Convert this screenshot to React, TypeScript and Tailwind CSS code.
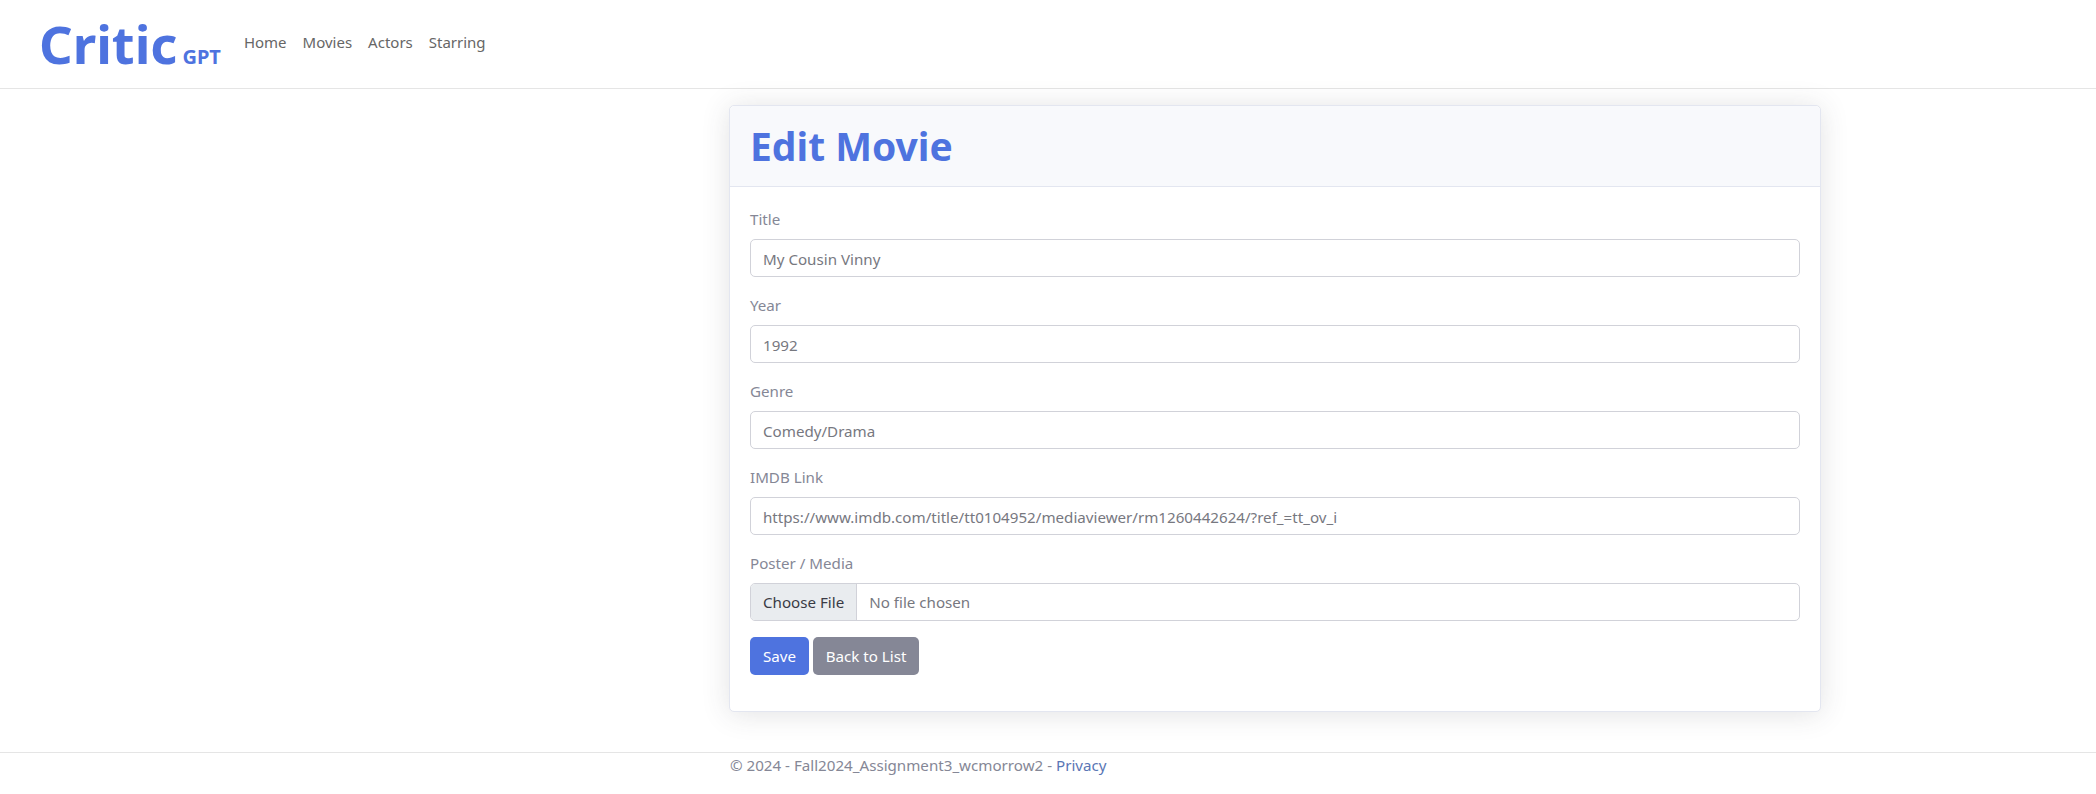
import React from 'react';

const font = { fontFamily: '"Noto Sans", sans-serif' };

const fields = [
  { label: 'Title', value: 'My Cousin Vinny' },
  { label: 'Year', value: '1992' },
  { label: 'Genre', value: 'Comedy/Drama' },
  { label: 'IMDB Link', value: 'https://www.imdb.com/title/tt0104952/mediaviewer/rm1260442624/?ref_=tt_ov_i' },
];

const links = ['Home', 'Movies', 'Actors', 'Starring'];

export default function App() {
  return (
    <div className="min-h-[794px] bg-white flex flex-col font-['Noto_Sans',sans-serif] text-[15.15px] text-[#858796]">
      <nav className="h-[89px] border-b border-[#e5e5e5] flex items-center pl-[39px]">
        <a className="flex items-baseline text-[#4e73df] font-bold">
          <span className="text-[52.5px] leading-[62px]">Critic</span>
          <span className="text-[20px] ml-[5px]">GPT</span>
        </a>
        <div className="flex ml-[23px] gap-4 mb-[3px] text-[15px] text-[#666666]">
          {links.map((l) => (
            <a key={l}>{l}</a>
          ))}
        </div>
      </nav>

      <main className="h-[663px] pt-4 pl-[729px]">
        <div className="w-[1092px] h-[607px] bg-white border border-[#e3e6f0] rounded-[5px] shadow-[0_2px_28px_rgba(58,59,69,0.15)]">
          <div className="h-[81px] bg-[#f8f9fc] border-b border-[#e3e6f0] rounded-t-[5px] flex items-center px-5">
            <h1 className="text-[39px] font-bold text-[#4e73df]">Edit Movie</h1>
          </div>
          <form className="px-5 pt-5">
            {fields.map((f) => (
              <div key={f.label} className="mb-4">
                <label className="block h-6 leading-6 mb-2">{f.label}</label>
                <input
                  readOnly
                  value={f.value}
                  style={font}
                  className="block w-full h-[38px] px-3 pt-[1px] border border-[#d1d2d9] rounded-[5px] text-[15.15px] text-[#77787f] outline-none"
                />
              </div>
            ))}
            <div className="mb-4">
              <label className="block h-6 leading-6 mb-2">Poster / Media</label>
              <input
                type="file"
                style={font}
                className="block w-full h-[38px] border border-[#d1d2d9] rounded-[5px] text-[15.15px] text-[#77787f] file:h-full file:px-3 file:mr-3 file:bg-[#e9ecef] file:border-0 file:border-r file:border-solid file:border-[#d1d2d9] file:text-[#3a3b45]"
              />
            </div>
            <div className="flex gap-1">
              <button type="button" className="h-[38px] w-[59px] rounded-[5px] bg-[#4e73df] text-white">Save</button>
              <button type="button" className="h-[38px] w-[106px] rounded-[5px] bg-[#858796] text-white">Back to List</button>
            </div>
          </form>
        </div>
      </main>

      <footer className="h-[42px] border-t border-[#e5e5e5] pl-[730px] leading-[24px] text-[#858796]">
        © 2024 - Fall2024_Assignment3_wcmorrow2 - <a className="text-[#5a76b5]">Privacy</a>
      </footer>
    </div>
  );
}
